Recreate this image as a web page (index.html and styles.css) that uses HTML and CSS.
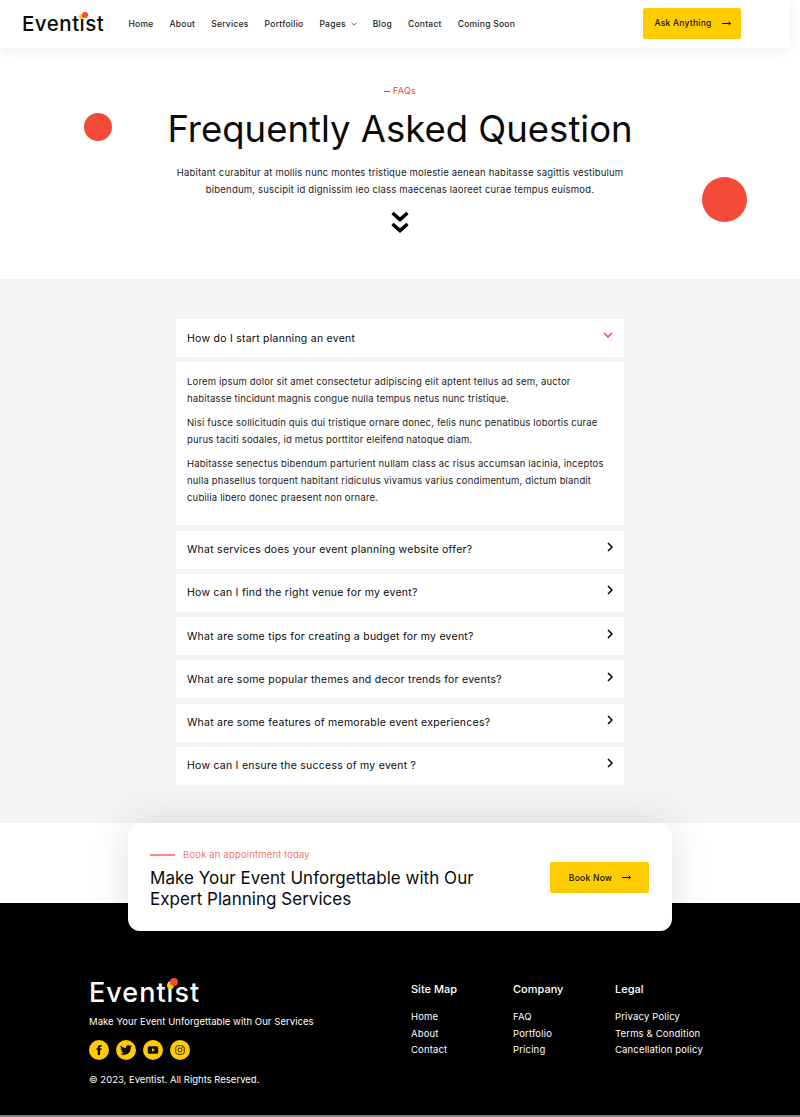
FILE: index.html
```html
<!DOCTYPE html>
<html lang="en">
<head>
<meta charset="utf-8">
<title>FAQs - Eventist</title>
<link rel="stylesheet" href="styles.css">
</head>
<body>
<header class="site-header">
  <a class="logo" href="#"><span class="logo-i">Eventist<i class="dot dot-y"></i><i class="dot dot-r"></i></span></a>
  <nav class="nav">
    <a href="#">Home</a><a href="#">About</a><a href="#">Services</a><a href="#">Portfoilio</a>
    <a href="#" class="has-sub">Pages <svg class="sub-caret" viewBox="0 0 10 6"><path d="M1 1l4 4 4-4"/></svg></a>
    <a href="#">Blog</a><a href="#">Contact</a><a href="#">Coming Soon</a>
  </nav>
  <a class="btn btn-head" href="#">Ask Anything <svg class="arrow" viewBox="0 0 9 7"><path d="M0 3.5h8.5M6.6 1.8l1.9 1.7-1.9 1.7"/></svg></a>
</header>

<section class="hero">
  <i class="blob blob-l"></i><i class="blob blob-r"></i>
  <p class="eyebrow">FAQs</p>
  <h1>Frequently Asked Question</h1>
  <p class="lead">Habitant curabitur at mollis nunc montes tristique molestie aenean habitasse sagittis vestibulum<br>bibendum, suscipit id dignissim leo class maecenas laoreet curae tempus euismod.</p>
  <svg class="double-down" viewBox="0 0 18 22"><path d="M1.5 2L9 8.5 16.5 2M1.5 13L9 19.5 16.5 13"/></svg>
</section>

<section class="faq">
  <div class="accordion">
    <div class="q open"><span>How do I start planning an event</span><svg viewBox="0 0 10 6"><path d="M1 1l4 4 4-4"/></svg></div>
    <div class="answer">
      <p>Lorem ipsum dolor sit amet consectetur adipiscing elit aptent tellus ad sem, auctor habitasse tincidunt magnis congue nulla tempus netus nunc tristique.</p>
      <p>Nisi fusce sollicitudin quis dui tristique ornare donec, felis nunc penatibus lobortis curae purus taciti sodales, id metus porttitor eleifend natoque diam.</p>
      <p>Habitasse senectus bibendum parturient nullam class ac risus accumsan lacinia, inceptos nulla phasellus torquent habitant ridiculus vivamus varius condimentum, dictum blandit cubilia libero donec praesent non ornare.</p>
    </div>
    <div class="q"><span>What services does your event planning website offer?</span><svg viewBox="0 0 6 10"><path d="M1 1l4 4-4 4"/></svg></div>
    <div class="q"><span>How can I find the right venue for my event?</span><svg viewBox="0 0 6 10"><path d="M1 1l4 4-4 4"/></svg></div>
    <div class="q"><span>What are some tips for creating a budget for my event?</span><svg viewBox="0 0 6 10"><path d="M1 1l4 4-4 4"/></svg></div>
    <div class="q"><span>What are some popular themes and decor trends for events?</span><svg viewBox="0 0 6 10"><path d="M1 1l4 4-4 4"/></svg></div>
    <div class="q"><span>What are some features of memorable event experiences?</span><svg viewBox="0 0 6 10"><path d="M1 1l4 4-4 4"/></svg></div>
    <div class="q"><span>How can I ensure the success of my event ?</span><svg viewBox="0 0 6 10"><path d="M1 1l4 4-4 4"/></svg></div>
  </div>
</section>

<section class="cta-band">
  <div class="cta-card">
    <div class="cta-copy">
      <p class="cta-eyebrow">Book an appointment today</p>
      <h2>Make Your Event Unforgettable with Our<br>Expert Planning Services</h2>
    </div>
    <a class="btn btn-cta" href="#">Book Now <svg class="arrow" viewBox="0 0 9 7"><path d="M0 3.5h8.5M6.6 1.8l1.9 1.7-1.9 1.7"/></svg></a>
  </div>
</section>

<footer class="site-footer">
  <div class="foot-brand">
    <a class="logo logo-foot" href="#"><span class="logo-i">Eventist<i class="dot dot-y"></i><i class="dot dot-r"></i></span></a>
    <p class="tagline">Make Your Event Unforgettable with Our Services</p>
    <div class="socials">
      <a href="#"><svg viewBox="0 0 24 24"><path class="fill" d="M14 8.5V6.8c0-.8.5-1 .9-1H17V2.2h-3c-3.1 0-4.6 2.2-4.6 4.4v1.9H7v3.6h2.4V22H14v-9.9h2.6l.4-3.6z"/></svg></a>
      <a href="#"><svg viewBox="0 0 24 24"><path class="fill" d="M23.953 4.57a10 10 0 01-2.825.775 4.958 4.958 0 002.163-2.723c-.951.555-2.005.959-3.127 1.184a4.92 4.92 0 00-8.384 4.482C7.69 8.095 4.067 6.13 1.64 3.162a4.822 4.822 0 00-.666 2.475c0 1.71.87 3.213 2.188 4.096a4.904 4.904 0 01-2.228-.616v.06a4.923 4.923 0 003.946 4.827 4.996 4.996 0 01-2.212.085 4.936 4.936 0 004.604 3.417 9.867 9.867 0 01-6.102 2.105c-.39 0-.779-.023-1.17-.067a13.995 13.995 0 007.557 2.209c9.053 0 13.998-7.496 13.998-13.985 0-.21 0-.42-.015-.63A9.935 9.935 0 0024 4.59z"/></svg></a>
      <a href="#"><svg viewBox="0 0 24 24"><path class="fill" fill-rule="evenodd" d="M4.5 4.5h15A3 3 0 0 1 22.5 7.5v9a3 3 0 0 1-3 3h-15a3 3 0 0 1-3-3v-9a3 3 0 0 1 3-3zM10 8.5v7l6-3.5z"/></svg></a>
      <a href="#"><svg viewBox="0 0 24 24"><g class="line"><rect x="3.5" y="3.5" width="17" height="17" rx="4.5"/><circle cx="12" cy="12" r="4"/></g><circle class="fill" cx="17" cy="7" r="1.1"/></svg></a>
    </div>
    <p class="copy">© 2023, Eventist. All Rights Reserved.</p>
  </div>
  <div class="foot-cols">
    <div class="foot-col"><h3>Site Map</h3><a href="#">Home</a><a href="#">About</a><a href="#">Contact</a></div>
    <div class="foot-col"><h3>Company</h3><a href="#">FAQ</a><a href="#">Portfolio</a><a href="#">Pricing</a></div>
    <div class="foot-col"><h3>Legal</h3><a href="#">Privacy Policy</a><a href="#">Terms &amp; Condition</a><a href="#">Cancellation policy</a></div>
  </div>
</footer>
<div class="page-edge"></div>
</body>
</html>
```
FILE: styles.css
```css
* { box-sizing: border-box; }
html, body { margin: 0; padding: 0; }
body { font-family: Inter, "Liberation Sans", sans-serif; background: #fff; color: #000; overflow-x: hidden; }
a { color: inherit; text-decoration: none; }
p, h1, h2, h3 { margin: 0; font-weight: 400; }

.site-header { position: relative; z-index: 2; width: 790px; height: 48px; display: flex; align-items: center; padding: 0 49px 0 22px; background: #fff; box-shadow: 0 2px 12px rgba(0,0,0,.08); }
.logo { display: block; font-size: 20.5px; line-height: 24px; font-weight: 500; letter-spacing: .5px; color: #0b0b0b; width: 82px; }
.logo-i { position: relative; display: inline-block; }
.dot { position: absolute; border-radius: 50%; }
.dot-y { width: 5px; height: 5px; left: 57.2px; top: 2.2px; background: #ffcc00; }
.dot-r { width: 6px; height: 6px; left: 59.5px; top: 0; background: #f44a37; }
.nav { display: flex; align-items: center; gap: 16px; margin-left: 24.5px; font-size: 8.5px; font-weight: 500; letter-spacing: .25px; color: #1c1c1c; }
.has-sub { display: flex; align-items: center; gap: 5px; }
.sub-caret { width: 6px; height: 4px; fill: none; stroke: #222; stroke-width: 1.2; }
.btn { display: flex; align-items: center; justify-content: center; background: #ffcc00; border-radius: 2px; font-size: 8.5px; font-weight: 500; letter-spacing: .25px; color: #111; }
.btn-head { margin: 0 0 2px auto; width: 98px; height: 31px; gap: 10px; padding-left: 1px; }
.arrow { width: 9px; height: 7px; fill: none; stroke: #000; stroke-width: 1; }

.hero { position: relative; height: 231px; padding-top: 37px; text-align: center; }
.blob { position: absolute; border-radius: 50%; background: #f44a37; }
.blob-l { left: 84px; top: 65px; width: 28px; height: 28px; }
.blob-r { left: 702px; top: 129px; width: 45px; height: 45px; }
.eyebrow { font-size: 9px; line-height: 12px; letter-spacing: .2px; color: #f44a37; }
.eyebrow::before { content: ""; display: inline-block; width: 6px; height: 1px; background: #f44a37; margin-right: 3px; vertical-align: middle; }
h1 { font-size: 36.5px; line-height: 46px; margin-top: 9px; color: #0a0a0a; }
.lead { font-size: 9.5px; line-height: 17px; letter-spacing: .19px; margin-top: 12px; color: #222; }
.double-down { display: block; width: 18px; height: 22px; margin: 13px auto 0; fill: none; stroke: #000; stroke-width: 3.6; }

.faq { background: #f4f4f4; padding: 40px 0 38.25px; }
.accordion { width: 448px; margin: 0 auto; display: flex; flex-direction: column; gap: 5.25px; }
.q { height: 38px; background: #fff; display: flex; align-items: center; justify-content: space-between; padding: 0 11px; font-size: 10.5px; font-weight: 430; letter-spacing: .25px; color: #0a0a0a; }
.q svg { width: 6px; height: 10px; margin-top: -5px; fill: none; stroke: #000; stroke-width: 1.5; }
.q.open svg { width: 10px; height: 6px; margin-top: -6px; stroke: #f44a37; }
.answer { background: #fff; height: 163px; padding: 11px; font-size: 9.5px; line-height: 17px; letter-spacing: .17px; color: #222; display: flex; flex-direction: column; gap: 7px; }

.cta-band { height: 80px; position: relative; z-index: 1; }
.cta-card { width: 544px; height: 108px; margin: 0 auto; background: #fff; border-radius: 12px; box-shadow: 0 0 40px rgba(0,0,0,.12); display: flex; align-items: center; justify-content: space-between; padding: 0 23px 0 22px; }
.cta-copy { margin-top: 4px; }
.cta-eyebrow { display: flex; align-items: center; gap: 8px; font-size: 9.5px; line-height: 14px; letter-spacing: .24px; color: #f44a37; font-weight: 300; }
.cta-eyebrow::before { content: ""; width: 25px; height: 1.5px; background: #f98a7e; }
h2 { font-size: 17px; line-height: 21px; letter-spacing: .03px; margin-top: 6px; color: #0a0a0a; }
.btn-cta { width: 99px; height: 31px; gap: 10px; margin-top: 1px; padding-left: 1px; }

.site-footer { background: #000; color: #fff; height: 212px; padding: 74px 0 0 89px; display: flex; }
.foot-brand { width: 322px; }
.logo-foot { font-size: 27px; line-height: 32px; letter-spacing: 1px; color: #fff; width: auto; }
.logo-foot .dot-y { width: 7px; height: 7px; left: 78px; top: 4.5px; }
.logo-foot .dot-r { width: 8px; height: 8px; left: 81.3px; top: 1.3px; }
.tagline { font-size: 9.5px; line-height: 14px; letter-spacing: .06px; margin-top: 6px; }
.socials { display: flex; gap: 7px; margin-top: 11px; }
.socials a { width: 20px; height: 20px; border-radius: 50%; background: #ffcc00; display: flex; align-items: center; justify-content: center; }
.socials svg { width: 12px; height: 12px; }
.fill { fill: #111; }
.line { fill: none; stroke: #111; stroke-width: 1.6; }
.copy { font-size: 9.5px; line-height: 14px; margin-top: 13px; }
.foot-cols { display: flex; margin-top: 5px; }
.foot-col { width: 102px; display: flex; flex-direction: column; font-size: 9.5px; line-height: 16.5px; letter-spacing: .16px; }
.foot-col h3 { font-size: 11px; line-height: 14px; font-weight: 500; letter-spacing: 0; margin-bottom: 13px; }
.page-edge { height: 2px; background: #808080; }
```
